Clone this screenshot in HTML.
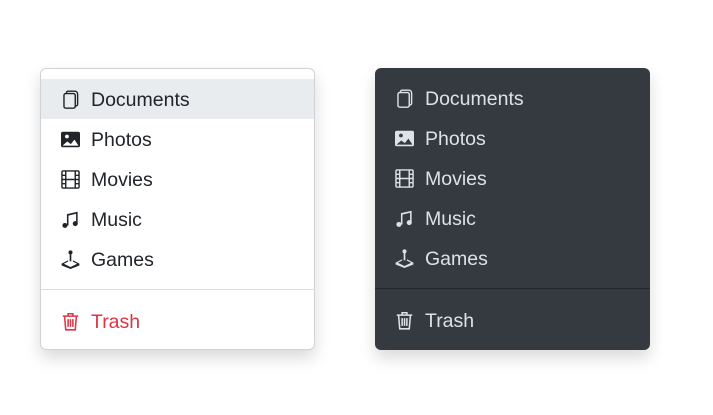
<!DOCTYPE html>
<html><head><style>
body{margin:0;width:713px;height:415px;background:#fff;font-family:"Liberation Sans",sans-serif;position:relative;overflow:hidden}
.m{position:absolute;top:68px;width:275px;height:282px;border-radius:6px;box-sizing:border-box}
.l{left:40px;border:1px solid #d0d3d6;background:#fff;box-shadow:0 8px 16px rgba(0,0,0,.15);color:#212529}
.d{left:375px;background:#343a40;box-shadow:0 8px 16px rgba(0,0,0,.15);color:#dee2e6}
.it{position:absolute;left:0;right:0;height:40px;font-size:19.5px}
.it svg{position:absolute;left:20px;top:11px;width:19px;height:19px}
.it span{position:absolute;left:50px;top:9px;line-height:24px}
.hr{position:absolute;left:0;right:0;height:1px}
</style></head><body>
<div class="m l">
 <div class="it" style="top:10px;background:#e9ecef"><svg viewBox="0 0 16 16" fill="none" stroke="#212529" stroke-width="1.2"><rect x="2.5" y="3" width="9.5" height="12.3" rx="1.5"/><path d="M4.5 3V2.5C4.5 1.7 5.2 1 6 1h5.5C13 1 14 2 14 3.5v8.5c0 .8-.7 1.5-1.5 1.5H12"/></svg><span>Documents</span></div>
 <div class="it" style="top:50px"><svg viewBox="0 0 16 16"><rect x="0" y="1.5" width="16" height="13" rx="1.5" fill="#212529"/><circle cx="5" cy="5.5" r="1.6" fill="#fff"/><path d="M1.3 13.2l4-3.5 3 2.2 3-3.8 3.4 5.1z" fill="#fff"/></svg><span>Photos</span></div>
 <div class="it" style="top:90px"><svg viewBox="0 0 16 16" fill="none" stroke="#212529" stroke-width="1.2"><rect x="0.8" y="0.8" width="14.4" height="14.4" rx="1"/><path d="M4 1v14M12 1v14M4 8h8M1 4.5h3M1 8h3M1 11.5h3M12 4.5h3M12 8h3M12 11.5h3"/></svg><span>Movies</span></div>
 <div class="it" style="top:130px"><svg viewBox="0 0 16 16" fill="#212529"><path d="M5 3.5L14 1.5v10h-1.3V3.2L6.3 4.7V13H5z"/><circle cx="3.3" cy="13" r="2.1"/><circle cx="12" cy="11.5" r="2.1"/></svg><span>Music</span></div>
 <div class="it" style="top:170px"><svg viewBox="0 0 16 16" fill="#212529"><circle cx="8" cy="2" r="1.7"/><rect x="7.3" y="3" width="1.4" height="6.5"/><path d="M0.5 11.5L6 8.6v1.2L2.4 11.6 8 14.3l5.6-2.7L10 9.8V8.6l5.5 2.9v1.6L8 16 0.5 13.1z"/></svg><span>Games</span></div>
 <div class="hr" style="top:220px;background:#dcdfe2"></div>
 <div class="it" style="top:232px;color:#dc3545"><svg viewBox="0 0 16 16" fill="none" stroke="#dc3545" stroke-width="1.3"><path d="M1.5 3.5h13M6 3.5V1.5h4v2M3 3.5l1 11.5h8l1-11.5M6 6v6.5M8 6v6.5M10 6v6.5"/></svg><span>Trash</span></div>
</div>
<div class="m d">
 <div class="it" style="top:10px"><svg viewBox="0 0 16 16" fill="none" stroke="#dee2e6" stroke-width="1.2"><rect x="2.5" y="3" width="9.5" height="12.3" rx="1.5"/><path d="M4.5 3V2.5C4.5 1.7 5.2 1 6 1h5.5C13 1 14 2 14 3.5v8.5c0 .8-.7 1.5-1.5 1.5H12"/></svg><span>Documents</span></div>
 <div class="it" style="top:50px"><svg viewBox="0 0 16 16"><rect x="0" y="1.5" width="16" height="13" rx="1.5" fill="#dee2e6"/><circle cx="5" cy="5.5" r="1.6" fill="#343a40"/><path d="M1.3 13.2l4-3.5 3 2.2 3-3.8 3.4 5.1z" fill="#343a40"/></svg><span>Photos</span></div>
 <div class="it" style="top:90px"><svg viewBox="0 0 16 16" fill="none" stroke="#dee2e6" stroke-width="1.2"><rect x="0.8" y="0.8" width="14.4" height="14.4" rx="1"/><path d="M4 1v14M12 1v14M4 8h8M1 4.5h3M1 8h3M1 11.5h3M12 4.5h3M12 8h3M12 11.5h3"/></svg><span>Movies</span></div>
 <div class="it" style="top:130px"><svg viewBox="0 0 16 16" fill="#dee2e6"><path d="M5 3.5L14 1.5v10h-1.3V3.2L6.3 4.7V13H5z"/><circle cx="3.3" cy="13" r="2.1"/><circle cx="12" cy="11.5" r="2.1"/></svg><span>Music</span></div>
 <div class="it" style="top:170px"><svg viewBox="0 0 16 16" fill="#dee2e6"><circle cx="8" cy="2" r="1.7"/><rect x="7.3" y="3" width="1.4" height="6.5"/><path d="M0.5 11.5L6 8.6v1.2L2.4 11.6 8 14.3l5.6-2.7L10 9.8V8.6l5.5 2.9v1.6L8 16 0.5 13.1z"/></svg><span>Games</span></div>
 <div class="hr" style="top:220px;background:#23272b"></div>
 <div class="it" style="top:232px"><svg viewBox="0 0 16 16" fill="none" stroke="#dee2e6" stroke-width="1.3"><path d="M1.5 3.5h13M6 3.5V1.5h4v2M3 3.5l1 11.5h8l1-11.5M6 6v6.5M8 6v6.5M10 6v6.5"/></svg><span>Trash</span></div>
</div>
</body></html>
